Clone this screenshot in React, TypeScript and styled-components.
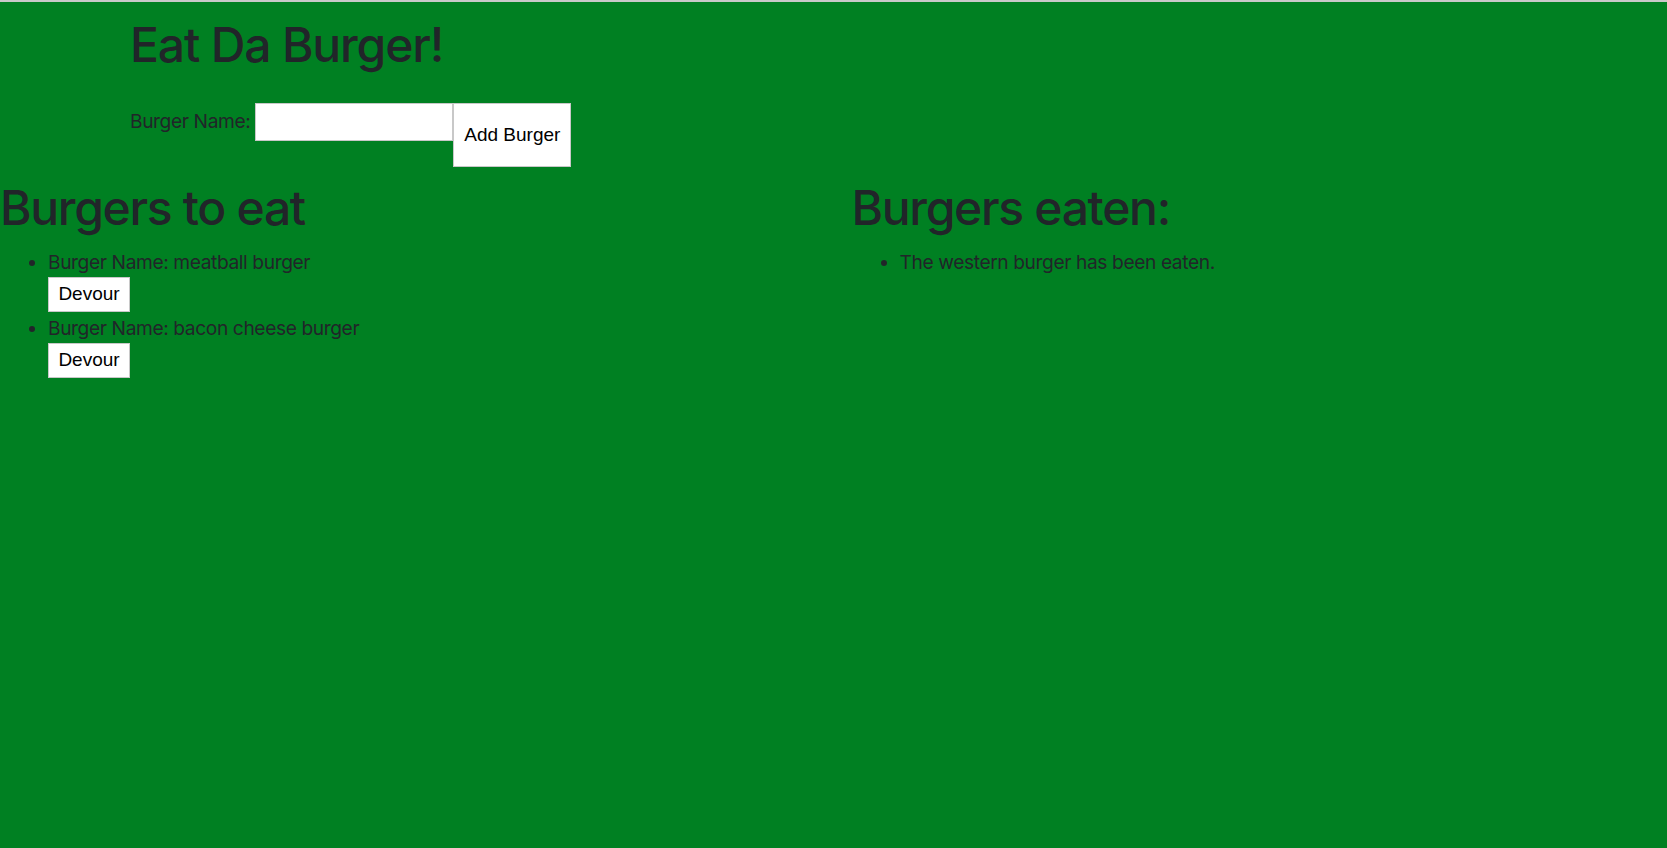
import styled, { createGlobalStyle } from "styled-components";

const GlobalStyle = createGlobalStyle`
  html, body {
    margin: 0;
    padding: 0;
    background-color: #008022;
  }
  body {
    font-family: Inter, "Noto Sans", sans-serif;
    font-size: 19.2px;
    line-height: 1.5;
    letter-spacing: -0.4px;
    color: #212529;
  }
`;

const Page = styled.div`
  min-height: 100vh;
  box-sizing: border-box;
  border-top: 2px solid #c9c9c9;
`;

const Header = styled.div`
  padding-left: 130px;
`;

const Title = styled.h1`
  margin: 0;
  padding-top: 14px;
  font-size: 48px;
  font-weight: 500;
  line-height: 1.2;
  letter-spacing: -1.15px;
`;

const BurgerForm = styled.form`
  display: flex;
  align-items: flex-start;
  margin-top: 29px;
`;

const Field = styled.div`
  display: flex;
  align-items: center;
  height: 38px;
  gap: 5px;
`;

const Label = styled.label`
  font-size: 19.2px;
`;

const NameInput = styled.input`
  box-sizing: border-box;
  width: 198px;
  height: 38px;
  margin: 0;
  border: 1px solid #c8c8c8;
  background: #fff;
  outline: none;
`;

const PlainButton = styled.button<{ $w: number; $h: number }>`
  box-sizing: border-box;
  width: ${(p) => p.$w}px;
  height: ${(p) => p.$h}px;
  margin: 0;
  padding: 0;
  border: 1px solid #c8c8c8;
  border-radius: 0;
  background: #fff;
  color: #000;
  font-family: "Liberation Sans", Arial, sans-serif;
  font-size: 19px;
  letter-spacing: 0;
  cursor: pointer;
`;

const DevourButton = styled(PlainButton)`
  display: block;
  margin-bottom: 2px;
`;

const Columns = styled.div`
  display: grid;
  grid-template-columns: 1fr 1fr;
  column-gap: 36px;
  margin-top: 12px;
`;

const Heading = styled.h2`
  margin: 0 0 12px;
  font-size: 48px;
  font-weight: 500;
  line-height: 1.2;
  letter-spacing: -1.3px;
`;

const BurgerList = styled.ul`
  margin: 0;
  padding-left: 48px;
`;

const Item = styled.li`
  line-height: 28.8px;
`;

const toEat = ["meatball burger", "bacon cheese burger"];
const eaten = ["western burger"];

export default function App() {
  return (
    <Page>
      <GlobalStyle />
      <Header>
        <Title>Eat Da Burger!</Title>
        <BurgerForm onSubmit={(e) => e.preventDefault()}>
          <Field>
            <Label htmlFor="burger">Burger Name:</Label>
            <NameInput id="burger" type="text" />
          </Field>
          <PlainButton type="submit" $w={118} $h={64}>
            Add Burger
          </PlainButton>
        </BurgerForm>
      </Header>
      <Columns>
        <div>
          <Heading>Burgers to eat</Heading>
          <BurgerList>
            {toEat.map((name) => (
              <Item key={name}>
                Burger Name: {name}
                <DevourButton type="button" $w={82} $h={35}>
                  Devour
                </DevourButton>
              </Item>
            ))}
          </BurgerList>
        </div>
        <div>
          <Heading>Burgers eaten:</Heading>
          <BurgerList>
            {eaten.map((name) => (
              <Item key={name}>The {name} has been eaten.</Item>
            ))}
          </BurgerList>
        </div>
      </Columns>
    </Page>
  );
}
